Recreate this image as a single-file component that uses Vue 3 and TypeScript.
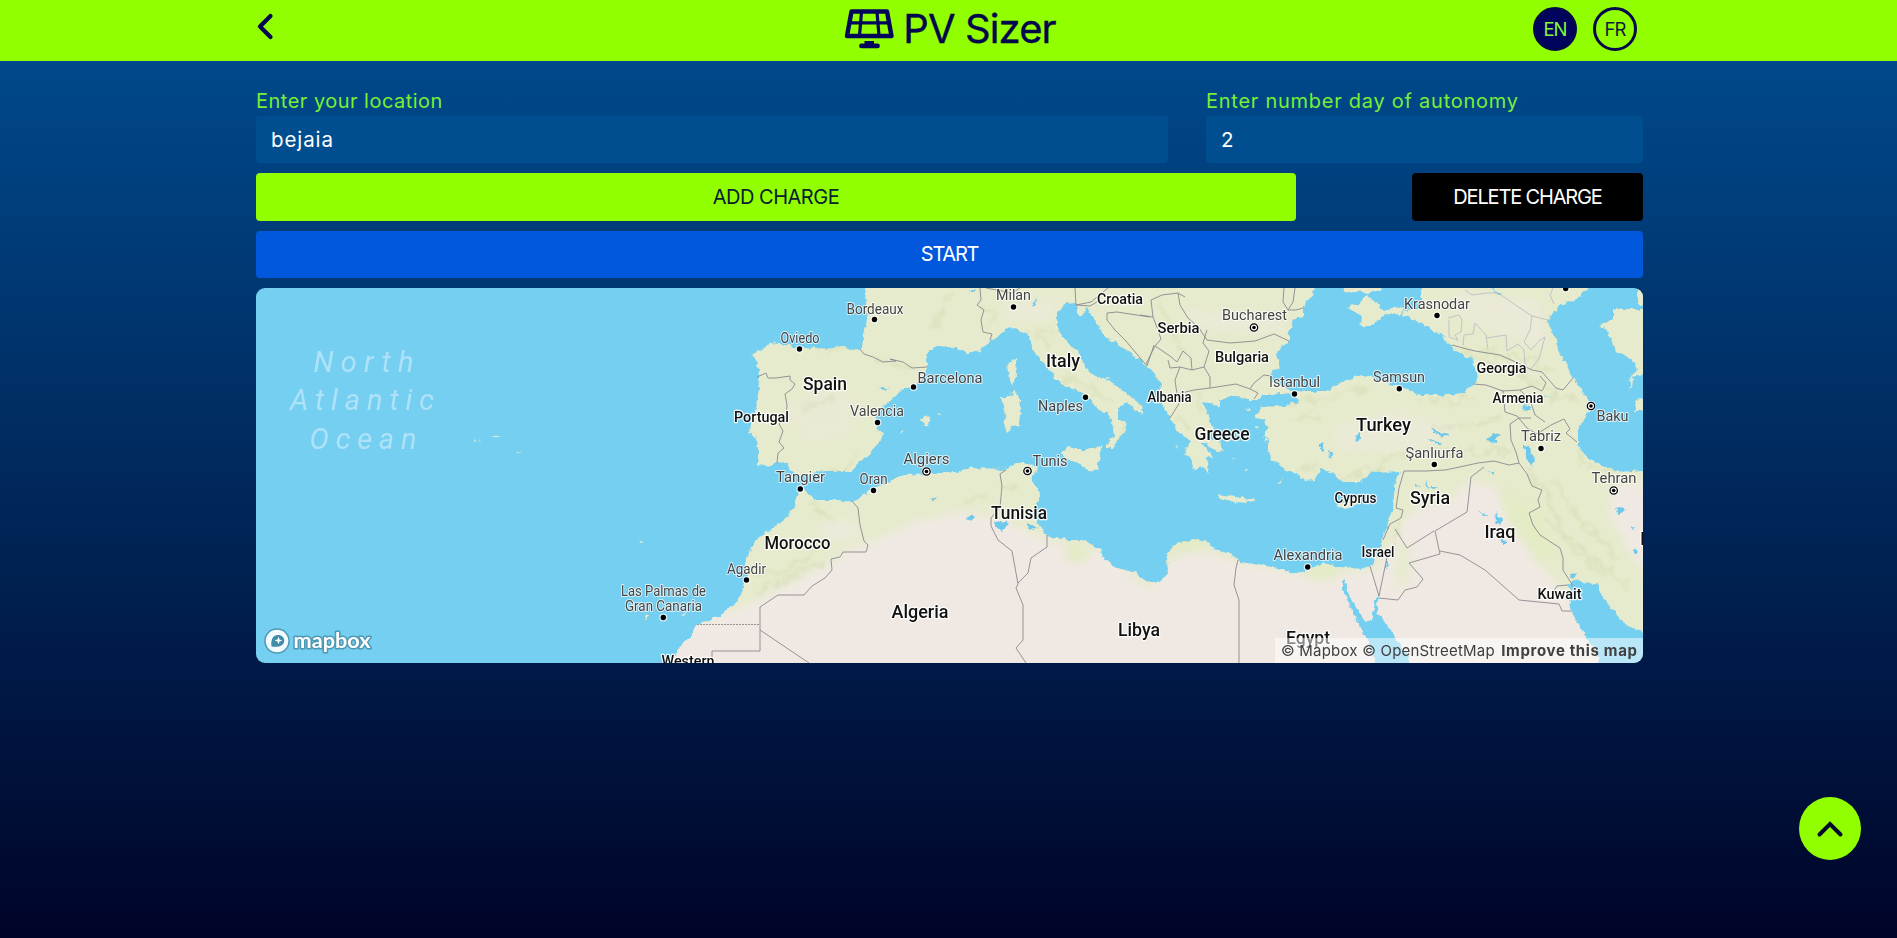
<script setup lang="ts">
import { ref } from 'vue'

interface Label { t: string; x: number; y: number; w: number; s?: number }

const location = ref('bejaia')
const days = ref('2')

// x is the label centre, y its baseline, w its drawn width
const countries: Label[] = [
  { t: 'Spain', x: 825, y: 389.5, w: 44, s: 18 },
  { t: 'Portugal', x: 761.5, y: 421.5, w: 55, s: 15 },
  { t: 'Morocco', x: 797.5, y: 549, w: 66, s: 18 },
  { t: 'Algeria', x: 920, y: 618, w: 57, s: 18 },
  { t: 'Libya', x: 1139, y: 636, w: 42, s: 18 },
  { t: 'Tunisia', x: 1019, y: 519, w: 56, s: 18 },
  { t: 'Italy', x: 1063, y: 367, w: 34, s: 18 },
  { t: 'Croatia', x: 1120, y: 304, w: 46, s: 15 },
  { t: 'Serbia', x: 1178.5, y: 333, w: 42, s: 15 },
  { t: 'Bulgaria', x: 1242, y: 362, w: 54, s: 15 },
  { t: 'Albania', x: 1169.5, y: 402, w: 44, s: 14 },
  { t: 'Greece', x: 1222, y: 440, w: 55, s: 18 },
  { t: 'Turkey', x: 1383.5, y: 431, w: 55, s: 18 },
  { t: 'Cyprus', x: 1355.5, y: 503, w: 42, s: 14 },
  { t: 'Israel', x: 1378, y: 557, w: 33, s: 14 },
  { t: 'Egypt', x: 1308, y: 644, w: 44, s: 18 },
  { t: 'Georgia', x: 1501.5, y: 373, w: 50, s: 15 },
  { t: 'Armenia', x: 1518, y: 402.5, w: 51, s: 14 },
  { t: 'Syria', x: 1430, y: 503.5, w: 40, s: 18 },
  { t: 'Iraq', x: 1500, y: 537.5, w: 31, s: 18 },
  { t: 'Kuwait', x: 1559.5, y: 598.5, w: 44, s: 14 },
  { t: 'Western', x: 688, y: 666, w: 53, s: 15 },
  { t: 'Iran', x: 1656, y: 545, w: 32, s: 18 },
]

const cities: Label[] = [
  { t: 'Bordeaux', x: 875, y: 313.5, w: 57 },
  { t: 'Oviedo', x: 800, y: 343, w: 39 },
  { t: 'Valencia', x: 877, y: 415.5, w: 54 },
  { t: 'Barcelona', x: 950, y: 382.5, w: 65 },
  { t: 'Tangier', x: 800.5, y: 482, w: 49 },
  { t: 'Oran', x: 873.5, y: 484, w: 28 },
  { t: 'Algiers', x: 926.5, y: 463.5, w: 46 },
  { t: 'Tunis', x: 1050, y: 465.5, w: 35 },
  { t: 'Naples', x: 1060.5, y: 411, w: 45 },
  { t: 'Milan', x: 1013.5, y: 299.5, w: 35 },
  { t: 'Agadir', x: 746.5, y: 574, w: 39 },
  { t: 'Las Palmas de', x: 663.5, y: 596, w: 85 },
  { t: 'Gran Canaria', x: 663.5, y: 611, w: 77 },
  { t: 'Bucharest', x: 1254.5, y: 320, w: 65 },
  { t: 'Istanbul', x: 1294.5, y: 387, w: 51 },
  { t: 'Samsun', x: 1399, y: 381.5, w: 52 },
  { t: 'Krasnodar', x: 1437, y: 309, w: 66 },
  { t: 'Şanlıurfa', x: 1434.5, y: 457.5, w: 58 },
  { t: 'Tabriz', x: 1541, y: 441, w: 40 },
  { t: 'Baku', x: 1612.5, y: 421, w: 32 },
  { t: 'Tehran', x: 1614, y: 482.5, w: 45 },
  { t: 'Alexandria', x: 1308, y: 560, w: 69 },
]

const ocean: Label[] = [
  { t: 'North', x: 363.5, y: 371.5, w: 100 },
  { t: 'Atlantic', x: 362, y: 410, w: 144 },
  { t: 'Ocean', x: 363, y: 449, w: 107 },
]

const dots: number[][] = [
  [874.5, 319.5], [799.5, 349], [877.5, 422.5], [913.5, 387], [800.3, 489], [873.5, 490.5],
  [746.5, 580], [663.3, 617.5], [1013.5, 307], [1085.5, 397.3], [1294.5, 394], [1399.3, 388.7],
  [1437, 315.5], [1434.3, 464.5], [1541, 448.5], [1307.7, 567], [1565.7, 288.5],
]
const capitals: number[][] = [[926.5, 471.5], [1027.5, 471], [1254, 327.5], [1591, 406], [1613.7, 490.5]]

const europe =
  'M867 280L866 305 867 320 864 335 862 346 858 349 850 350 843 347 825 349 810 347 800 348 780 344 770 343 764 349 755 352 752 355 757 360 756 366 760 372 758 380 760 388 758 400 755 412 751 425 749 434 755 436 758 443 758 456 757 465 766 466 778 463 785 462 790 468 797 474 805 477 812 474 825 471 842 471 852 471 857 463 868 457 875 446 884 436 879 430 875 420 880 408 888 401 895 395 903 390 913 387 923 378 927 367 927 355 932 349 940 346 957 348 968 353 980 350 992 340 1008 327 1018 330 1027 335 1031 341 1033 350 1043 363 1057 380 1072 389 1080 391 1087 397 1097 408 1107 413 1112 422 1114 435 1107 445 1107 449 1112 449 1118 440 1126 430 1125 422 1118 422 1118 407 1128 403 1138 412 1142 415 1144 408 1133 397 1112 383 1106 380 1112 378 1097 377 1088 371 1082 360 1079 352 1070 345 1063 337 1060 330 1057 327 1057 312 1067 303 1077 302 1078 313 1081 317 1087 307 1095 320 1105 337 1123 347 1147 366 1157 377 1162 390 1162 403 1170 417 1174 423 1177 430 1190 442 1185 453 1192 462 1194 471 1199 465 1204 469 1209 473 1208 462 1205 457 1213 458 1207 448 1200 443 1206 443 1215 450 1223 452 1220 443 1207 437 1213 430 1207 413 1203 403 1212 402 1220 407 1220 400 1233 395 1247 400 1257 400 1263 395 1273 395 1290 393 1292 391 1278 384 1270 377 1275 370 1279 368 1277 353 1281 348 1288 343 1290 330 1294 319 1303 317 1303 308 1313 293 1317 280Z'
const asiaAfrica =
  'M1297 390L1307 391 1327 391 1343 382 1357 376 1373 377 1388 383 1399 387 1410 390 1420 395 1447 395 1463 393 1477 380 1475 368 1472 360 1453 348 1445 338 1433 330 1413 320 1403 315 1405 311 1420 307 1420 297 1427 280 1592 280 1587 288 1577 300 1560 305 1547 322 1555 337 1558 350 1573 377 1587 397 1594 407 1587 413 1583 423 1578 427 1578 447 1590 460 1607 467 1623 472 1650 469 1650 635 1637 630 1623 623 1615 612 1607 603 1597 585 1587 582 1573 580 1568 586 1572 593 1568 600 1572 613 1583 633 1597 653 1598 670 1414 670 1402 646 1390 630 1383 617 1377 612 1379 595 1376 597 1372 617 1367 622 1357 610 1347 590 1343 577 1343 590 1350 607 1362 630 1372 650 1376 670 670 670 678 650 688 640 697 625 720 615 737 602 747 580 745 563 753 543 767 532 783 522 795 507 800 488 805 490 815 500 840 500 853 502 867 493 880 485 898 477 907 475 927 473 957 473 970 468 1005 469 1017 463 1028 463 1038 468 1032 480 1040 493 1038 503 1032 513 1040 528 1050 537 1067 540 1083 540 1100 548 1103 558 1113 567 1137 573 1150 582 1155 583 1162 580 1168 573 1167 557 1171 548 1177 543 1193 539 1210 543 1212 548 1237 557 1240 562 1273 567 1297 574 1307 570 1323 563 1340 567 1360 569 1373 565 1385 533 1393 510 1395 480 1400 472 1385 473 1373 470 1368 476 1360 482 1343 482 1330 472 1320 469 1315 480 1305 481 1297 473 1287 470 1272 460 1268 450 1268 440 1264 435 1267 427 1265 420 1255 418 1262 407 1285 406 1300 402 1296 396Z'
const islands =
  'M1340 280L1345 292 1358 291 1368 294 1378 290 1400 280ZM1348 307L1359 303 1367 295 1376 302 1383 311 1393 307 1405 309 1400 314 1385 315 1370 327 1361 326 1362 317 1355 312ZM1016 358L1017 376 1013 386 1009 379 1006 366ZM1016 391L1020 398 1020 412 1019 426 1011 427 1008 432 1003 428 1006 420 1001 397 1007 397ZM1061 453L1066 447 1078 449 1090 449 1103 445 1099 460 1097 471 1089 470 1075 462ZM918 421L926 415 931 420 926 425ZM938 413L943 414 938 415ZM901 433L905 431 902 435ZM1218 494L1230 496 1256 500 1249 503 1235 502 1219 498ZM1336 505L1345 501 1363 496 1357 504 1345 510ZM1278 484L1284 478 1280 485ZM1267 440L1263 437 1265 442ZM1255 426L1260 428 1256 430ZM1246 409L1251 408 1251 411ZM1650 309L1613 309 1613 319 1600 325 1608 331 1615 350 1633 360 1637 370 1630 380 1630 389 1634 377 1650 371ZM1635 400L1650 398 1650 411 1634 411ZM1636 288L1650 285 1650 308 1640 304ZM644 615L649 614 648 619 646 618ZM681 616L686 611 684 616ZM474 437L475 441 474 441ZM478 440L482 442 478 441ZM493 436L498 436 498 437 493 437ZM516 452L524 453 518 454ZM638 540L644 541 640 542ZM1224 438L1230 440 1226 442ZM1232 457L1236 458 1233 460ZM1245 470L1248 468 1247 472ZM1175 443L1178 449 1175 446Z'
const water =
  'M1033 302L1037 298 1034 307 1032 306ZM968 291L976 288 971 293ZM931 499L936 497 934 501ZM967 518L974 513 975 517 970 522ZM994 523L1006 522 1009 525 1002 530 995 527ZM1026 524L1034 526 1038 529 1032 530ZM1355 435L1361 432 1361 439 1357 441ZM1320 445L1323 443 1323 453 1320 450ZM1328 451L1333 454 1332 458 1329 456ZM1486 439L1494 434 1502 433 1496 438 1496 443 1489 442ZM1522 405L1530 406 1530 409 1525 411ZM1542 394L1554 398 1544 396ZM1524 446L1530 445 1531 453 1536 461 1531 466 1527 460ZM1431 427L1438 432 1449 434 1442 437 1435 433ZM1426 437L1440 443 1442 446 1434 442ZM1486 469L1494 473 1494 475ZM1425 480L1430 487 1438 487 1433 489 1426 485ZM1415 484L1419 486 1416 488ZM1478 511L1487 515 1485 516ZM1495 512L1502 520 1500 525 1496 522ZM1500 539L1506 541 1506 545 1501 543ZM1616 509L1621 507 1625 510 1619 515ZM1630 525L1635 527 1633 529ZM1633 551L1637 549 1636 554 1633 553ZM1386 559L1388 562 1387 570 1386 567ZM878 388L883 387 890 389 882 390ZM1491 288L1503 295 1499 295ZM1571 574L1577 572 1575 577 1570 579Z'
const borders =
  'M757 377L766 373 768 378 776 378 790 376 790 380 795 384 792 389 785 394 787 405 786 416 779 424 783 431 779 442 784 448 778 453 777 463M860 349L864 354 873 357 883 362 896 361 890 359 903 362 912 368 927 367M980 288L981 300 977 305 984 310 981 320 983 332 992 334 990 340M986 288L1012 293 1020 288M1075 288L1076 305 1090 306 1100 300M1107 313L1117 312 1130 314 1150 317M1107 313L1107 320 1115 330 1125 340 1147 366 1154 345M1076 305L1091 302 1108 288M1140 315L1153 317 1158 330 1161 339 1155 346 1170 356 1177 362 1183 351 1191 358 1192 370 1180 367 1175 380 1177 394 1180 402 1170 418M1153 317L1151 300 1162 295 1178 293 1185 297M1178 293L1180 305 1188 318 1199 328 1207 340 1230 343 1255 341 1274 334 1289 341M1207 330L1203 343 1209 351 1204 367 1210 377 1210 388 1236 384 1250 389 1254 383 1264 375 1271 376M1192 370L1204 367M1177 394L1194 390 1210 388M1250 389L1258 393 1254 399M1155 346L1151 354 1146 364M1168 360L1170 368 1180 367M1284 288L1283 302 1288 310 1296 310 1303 308M1295 288L1293 302 1288 310M852 501L858 508 860 525 864 541 868 545 866 552 843 552 840 557 831 559 832 570 825 578 812 586 804 595 778 595 760 607 760 651 712 651 712 663M760 630L809 663M1006 470L1000 474 1002 486 1000 507 991 518 991 526 998 540 1012 551 1018 584 1016 588 1023 605 1023 640 1016 648 1026 663M1047 535L1047 547 1031 558 1028 573 1018 583M1238 560L1236 568 1234 585 1239 600 1239 663M1370 566L1379 596 1387 557M1379 598L1398 600 1405 590 1417 587 1423 579 1409 563 1440 554 1435 531 1467 512 1471 477 1484 467M1440 551L1460 555 1485 570 1519 600 1559 604 1562 611 1572 611M1395 529L1407 548 1434 531M1383 540L1390 524 1401 518 1403 510 1396 508 1399 488 1404 471 1426 471 1445 470 1455 468 1478 463 1494 461 1509 465 1519 463 1516 452 1511 440 1510 424 1519 418 1531 418M1519 463L1527 474 1532 486 1542 490 1538 500 1540 507 1529 513 1533 525 1540 535 1560 548 1563 558 1563 570 1573 586M1473 384L1486 385 1503 391 1505 412 1517 416 1527 428 1537 434 1551 425 1564 419 1570 429 1566 433 1577 442M1452 345L1463 348 1475 351 1500 355 1520 364 1532 370 1542 372 1556 388 1563 390 1573 378M1502 391L1520 390 1532 386 1542 391 1546 383 1540 376M1520 390L1530 400 1535 415 1545 422M1552 593L1557 586 1568 585'
const regional =
  'M1465 290L1472 295 1487 293 1498 293 1517 306 1532 316 1548 320M1532 316L1530 330 1524 342 1531 350 1540 340 1545 337 1539 359 1530 370M1448 318L1459 315 1462 320 1461 332 1455 335 1458 340 1449 337 1449 320M1463 345L1464 335 1473 334 1475 323 1486 335 1488 350M1486 338L1506 335 1507 351 1518 344 1524 350 1525 365M1553 288L1550 295 1554 304'
const relief =
  'M803 408L822 403 833 399M788 346L812 345 846 348M848 473L838 478M820 474L845 467 857 458M808 502L823 512 829 521M753 577L780 572 800 560 823 548M755 595L785 578 825 562M873 357L890 364 915 367M932 330L945 307 950 290M988 332L993 320 985 303M1060 325L1045 330 1035 335 1050 345M1065 375L1078 382 1090 388 1115 402M1016 366L1015 383M1123 420L1122 440M1065 448L1085 450 1100 448M1157 300L1170 320 1180 350M1190 390L1200 405 1203 415M1177 415L1190 430M1280 405L1320 400 1370 386M1300 470L1315 470 1320 460M1343 475L1368 472 1390 458 1405 452M1290 420L1315 415M1425 400L1450 401 1477 396M1430 430L1470 425 1500 418M1425 450L1465 452 1510 450M1455 350L1490 362 1530 378 1560 400M1480 350L1520 358 1555 370M1550 400L1565 396 1580 402M1575 440L1583 463 1610 472M1530 470L1548 500 1565 535 1595 560 1630 590M1555 480L1580 520 1620 560M1545 515L1570 548 1605 575M1398 520L1394 545M965 500L990 495M1000 485L1020 490'
</script>

<template>
  <div class="page">
    <header class="bar">
      <div class="container bar-inner">
        <button class="back" aria-label="Back">
          <svg width="20" height="30" viewBox="0 0 20 30"><path d="M14.500 4 4 14.500 14.500 25" /></svg>
        </button>
        <div class="brand">
          <svg class="panel" width="50" height="44" viewBox="0 0 50 44">
            <path d="M7.500 4.500h35.500l4.500 24.500H3z" />
            <path d="M5.500 15.800h40M17.500 5l-2 24M33 5l2 24" class="thin" />
            <path d="M20.500 34h9.500v2.500h3.500a2.300 2.300 0 0 1 0 4.800H17.500a2.300 2.300 0 0 1 0-4.800h3z" class="foot" />
          </svg>
          <span class="brand-name">PV Sizer</span>
        </div>
        <nav class="langs">
          <button class="lang active">EN</button>
          <button class="lang">FR</button>
        </nav>
      </div>
    </header>

    <main class="container form">
      <div class="fields">
        <label class="field place"><span class="cap cap-place">Enter your location</span><input v-model="location" class="input" /></label>
        <label class="field autonomy"><span class="cap cap-days">Enter number day of autonomy</span><input v-model="days" class="input" /></label>
      </div>
      <div class="actions">
        <button class="btn add">ADD CHARGE</button>
        <button class="btn delete">DELETE CHARGE</button>
      </div>
      <button class="btn start">START</button>

      <section class="map">
        <svg class="map-svg" width="1387" height="375" viewBox="256 288 1387 375">
          <defs>
            <filter id="coast" filterUnits="userSpaceOnUse" x="240" y="270" width="1420" height="410">
              <feTurbulence type="fractalNoise" baseFrequency="0.16" numOctaves="3" seed="4" />
              <feDisplacementMap in="SourceGraphic" scale="6" xChannelSelector="R" yChannelSelector="G" />
            </filter>
            <filter id="soft" x="-10%" y="-10%" width="120%" height="120%"><feGaussianBlur stdDeviation="5" /></filter>
            <filter id="ridge" filterUnits="userSpaceOnUse" x="240" y="270" width="1420" height="410">
              <feTurbulence type="fractalNoise" baseFrequency="0.08" numOctaves="3" seed="9" />
              <feDisplacementMap in="SourceGraphic" scale="20" xChannelSelector="R" yChannelSelector="G" />
              <feGaussianBlur stdDeviation="1.1" />
            </filter>
            <clipPath id="land"><path :d="europe" /><path :d="asiaAfrica" /></clipPath>
          </defs>
          <rect x="256" y="288" width="1387" height="375" fill="#75cff0" />
          <g filter="url(#coast)">
            <path :d="europe + asiaAfrica + islands" fill="#e7ebcd" />
            <g clip-path="url(#land)">
              <g filter="url(#soft)" fill="#f0e9e3">
                <path d="M640 680L690 622 740 608 780 588 825 565 850 550 875 540 915 522 960 512 1000 518 1050 542 1100 550 1150 590 1170 560 1195 548 1240 562 1310 576 1375 570 1394 540 1410 512 1450 500 1470 480 1500 490 1510 520 1535 560 1570 600 1610 680Z" />
                <path d="M1612 485L1660 478V590L1635 560 1610 515Z" />
                <ellipse cx="840" cy="530" rx="22" ry="9" opacity=".7" />
                <path d="M1000 305L1060 300 1050 320 1008 321Z" opacity=".45" />
                <path d="M785 405L820 390 860 400 850 435 805 445Z" opacity=".35" />
                <path d="M1180 310L1285 315 1280 335 1200 330Z" opacity=".45" />
                <path d="M1330 425L1400 410 1460 430 1420 450 1340 450Z" opacity=".45" />
                <path d="M1450 292L1540 300 1545 350 1500 335 1450 310Z" opacity=".5" />
              </g>
              <g filter="url(#soft)" fill="#e3ebc4">
                <ellipse cx="1077" cy="553" rx="12" ry="10" />
                <ellipse cx="1190" cy="544" rx="19" ry="6" />
                <ellipse cx="1322" cy="572" rx="16" ry="9" />
                <path d="M1500 490L1540 510 1560 555 1540 560 1510 520Z" />
                <ellipse cx="1403" cy="565" rx="7" ry="25" opacity=".7" />
              </g>
              <path :d="relief" class="relief" filter="url(#ridge)" />
            </g>
            <path :d="water" fill="#6cc8ec" />
          </g>
          <path :d="regional" class="regional" />
          <path :d="borders" class="border" />
          <path d="M697 624.500H760" class="border" stroke-dasharray="2 1" />

          <text v-for="l in ocean" :key="l.t" :x="l.x" :y="l.y" :textLength="l.w" class="ocean">{{ l.t }}</text>
          <g v-for="(d, i) in dots" :key="'d' + i">
            <circle :cx="d[0]" :cy="d[1]" r="4" fill="#fff" opacity=".7" /><circle :cx="d[0]" :cy="d[1]" r="2.700" />
          </g>
          <g v-for="(d, i) in capitals" :key="'k' + i">
            <circle :cx="d[0]" :cy="d[1]" r="4.900" fill="#fff" /><circle :cx="d[0]" :cy="d[1]" r="3.700" fill="#fff" stroke="#000" stroke-width="1.300" /><circle :cx="d[0]" :cy="d[1]" r="1.800" />
          </g>
          <text v-for="l in cities" :key="l.t" :x="l.x" :y="l.y" :textLength="l.w" lengthAdjust="spacingAndGlyphs" class="city">{{ l.t }}</text>
          <text v-for="l in countries" :key="l.t" :x="l.x" :y="l.y" :textLength="l.w" :font-size="l.s" lengthAdjust="spacingAndGlyphs" class="country">{{ l.t }}</text>

          <g>
            <circle cx="277" cy="641" r="12.800" fill="#4d98b2" /><circle cx="277" cy="641" r="11.300" fill="#f3fbff" />
            <path d="M271.500 646.500c-1-6 1-11.500 6.500-11.500 3.800 0 6.200 2.500 6.200 5.800 0 5.200-6 6.700-12.700 5.700z" fill="#3f8daa" />
            <path d="M278.500 636.700l1.100 2.700 2.700 1.100-2.700 1.100-1.100 2.700-1.100-2.700-2.700-1.100 2.700-1.100z" fill="#fff" />
            <text x="293.500" y="647.500" textLength="77" lengthAdjust="spacingAndGlyphs" class="logo">mapbox</text>
          </g>
        </svg>
        <div class="credit"><span class="credit-src">© Mapbox © OpenStreetMap</span><b>Improve this map</b></div>
      </section>
    </main>

    <button class="top" aria-label="Back to top">
      <svg width="30" height="20" viewBox="0 0 30 20"><path d="M4.500 15.500 15 5l10.500 10.500" /></svg>
    </button>
  </div>
</template>

<style>
body { margin: 0; background: #000428; overflow: hidden; }
</style>

<style scoped>
.page { height: 938px; background: linear-gradient(to bottom, #004e92, #000428); font-family: Inter, "Open Sans", sans-serif; color: #fff; }
button { font-family: inherit; border: 0; padding: 0; }
.container { width: 1387px; margin-left: 256px; }
.bar { height: 61px; background: #91ff00; }
.bar-inner { height: 61px; display: grid; grid-template-columns: 1fr auto 1fr; align-items: center; }
.back { background: none; width: 20px; height: 30px; margin-bottom: 8px; }
.back path { fill: none; stroke: #00074f; stroke-width: 4.200; stroke-linecap: round; stroke-linejoin: round; }
.back svg { display: block; }
.brand { display: flex; align-items: center; height: 58px; align-self: start; color: #03074b; }
.panel { fill: none; stroke: #03075b; stroke-width: 4.400; stroke-linejoin: round; margin: -1px 9px 0 0; }
.panel .thin { stroke-width: 3.200; }
.panel .foot { fill: #03075b; stroke: none; }
.brand-name { font-size: 40px; line-height: 58px; letter-spacing: -.9px; font-weight: 400; margin-right: -1px; -webkit-text-stroke: .4px #03074b; }
.langs { display: flex; justify-content: flex-end; gap: 16px; padding-right: 6px; align-self: start; margin-top: 7px; }
.lang { box-sizing: border-box; width: 44px; height: 44px; border-radius: 50%; border: 3px solid #03074b; background: none; color: #0b1c3e; font-size: 18.500px; letter-spacing: -1px; }
.lang.active { background: #00045c; color: #88f53a; }
.form { padding-top: 24px; }
.fields { display: flex; justify-content: space-between; }
.field { display: flex; flex-direction: column; }
.place { width: 912px; }
.autonomy { width: 437px; }
.cap { height: 31px; line-height: 32px; font-size: 20px; color: #77f035; white-space: nowrap; }
.cap-place { letter-spacing: .48px; }
.cap-days { letter-spacing: .74px; }
.input { box-sizing: border-box; height: 47px; border: 0; border-radius: 4px; padding: 0 15px 1px; background: #004e90; color: #fff; font: 400 20.500px Inter, sans-serif; letter-spacing: .9px; outline: 0; }
.actions { display: flex; justify-content: space-between; margin: 10px 0; }
.btn { height: 48px; border-radius: 4px; font-size: 20px; letter-spacing: -.5px; color: #fff; display: block; }
.add { width: 1040px; background: #91ff00; color: #082033; }
.delete { width: 231px; background: #000; letter-spacing: -1.150px; }
.start { width: 100%; height: 47px; background: #0258dc; letter-spacing: -1.250px; padding-bottom: 1px; }
.map { position: relative; height: 375px; margin-top: 10px; border-radius: 9px; overflow: hidden; }
.map-svg { display: block; }
.border { fill: none; stroke: #8b8990; stroke-width: .9; stroke-linejoin: round; }
.regional { fill: none; stroke: #b9b9c5; stroke-width: .8; }
.relief { fill: none; stroke: #cbd3a5; stroke-width: 4; opacity: .32; }
text { text-anchor: middle; font-family: Roboto, sans-serif; paint-order: stroke; stroke-linejoin: round; }
.ocean { font-size: 29px; font-style: italic; font-weight: 400; fill: #aee2f8; }
.city { font-size: 15px; fill: #444; stroke: rgba(255, 255, 255, .75); stroke-width: 2px; }
.country { font-weight: 500; fill: #111; stroke: rgba(255, 255, 255, .85); stroke-width: 2.500px; }
.logo { text-anchor: start; font: 700 21px Lato, sans-serif; fill: #fff; stroke: #4d98b2; stroke-width: 3px; }
.credit { position: absolute; right: 0; bottom: 0; box-sizing: border-box; width: 368px; height: 25px; padding: 0 6px; display: flex; justify-content: space-between; background: rgba(255, 255, 255, .5); color: #404040; font-size: 15px; line-height: 25px; white-space: nowrap; }
.credit-src { letter-spacing: .2px; }
.credit b { letter-spacing: .65px; margin-right: -.65px; }
.top { position: fixed; left: 1799px; top: 797px; width: 62px; height: 63px; border-radius: 50%; background: #91ff00; display: grid; place-items: center; }
.top path { fill: none; stroke: #000a2c; stroke-width: 4; stroke-linecap: round; }
</style>
